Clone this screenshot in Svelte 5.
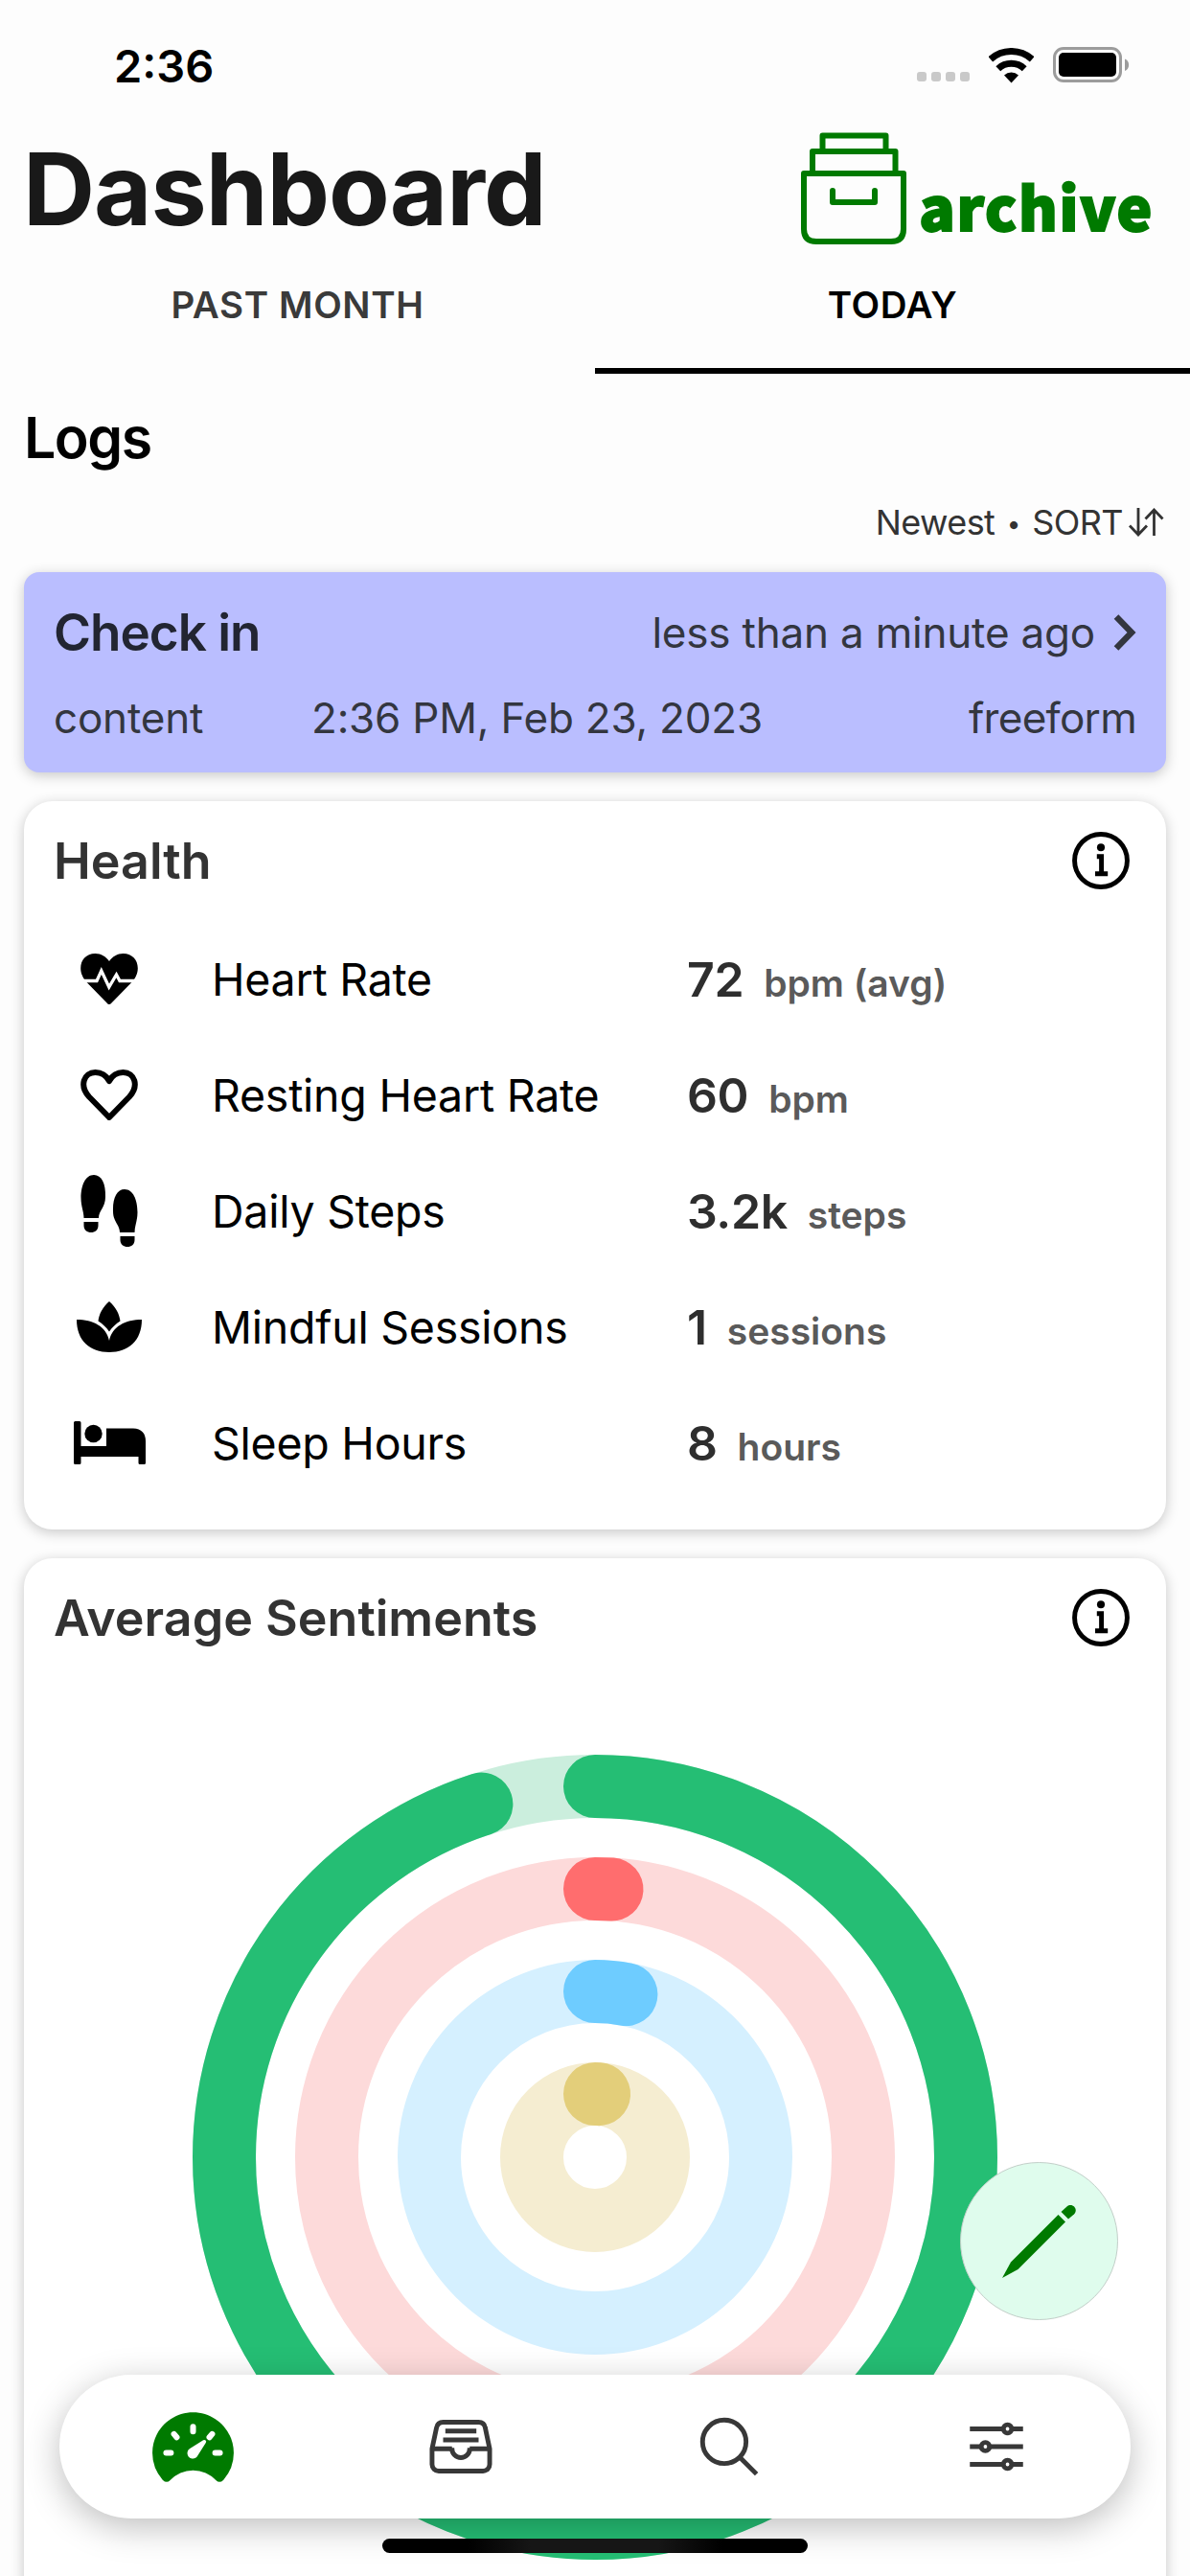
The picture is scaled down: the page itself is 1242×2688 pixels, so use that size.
<script lang="ts">
	interface Metric {
		icon: string;
		label: string;
		value: string;
		unit: string;
	}

	interface Ring {
		radius: number;
		percent: number;
		color: string;
		track: string;
	}

	let tab: 'month' | 'today' = 'today';
	let page = 'dashboard';

	const metrics: Metric[] = [
		{ icon: 'pulse', label: 'Heart Rate', value: '72', unit: 'bpm (avg)' },
		{ icon: 'heart', label: 'Resting Heart Rate', value: '60', unit: 'bpm' },
		{ icon: 'steps', label: 'Daily Steps', value: '3.2k', unit: 'steps' },
		{ icon: 'leaf', label: 'Mindful Sessions', value: '1', unit: 'sessions' },
		{ icon: 'bed', label: 'Sleep Hours', value: '8', unit: 'hours' }
	];

	const rings: Ring[] = [
		{ radius: 387, percent: 95, color: '#25be74', track: '#cbeedd' },
		{ radius: 280, percent: 1, color: '#ff6d6e', track: '#fddada' },
		{ radius: 173, percent: 3, color: '#6eccff', track: '#d5f0ff' },
		{ radius: 66, percent: 1, color: '#e3ce7a', track: '#f5edd1' }
	];

	const pages = ['dashboard', 'logs', 'search', 'settings'];

	function dash(ring: Ring) {
		const length = 2 * Math.PI * ring.radius;
		return `${(length * ring.percent) / 100} ${length}`;
	}
</script>

{#snippet info()}
	<svg class="info" viewBox="48 48 400 400">
		<g fill="none" stroke="#000" stroke-width="33">
			<circle cx="248" cy="248" r="183" />
			<path d="M220 220h32v116M208 340h88" />
		</g>
		<circle cx="248" cy="156" r="27" />
	</svg>
{/snippet}

<main>
	<div class="status">
		<span class="clock">2:36</span>
		<div class="indicators">
			<div class="signal">
				<i></i><i></i><i></i><i></i>
			</div>
			<svg class="wifi" width="47" height="37" viewBox="0 0 47 37">
				<g fill="none" stroke="#000" stroke-width="7">
					<path d="M1.8 11.8A32.5 32.5 0 0 1 45.2 11.8" />
					<path d="M9.8 21.8A20 20 0 0 1 37.2 21.8" />
				</g>
				<path d="M16 28.5A11 11 0 0 1 31 28.5L23.5 36.5Z" />
			</svg>
			<svg width="80" height="38" viewBox="0 0 80 38">
				<rect x="1.5" y="1.5" width="69" height="34" rx="9.5" fill="none" stroke="#9c9c9c" stroke-width="3" />
				<rect x="6" y="6" width="60" height="25" rx="5" />
				<path d="M75 12.5c5.5 2 5.5 10.5 0 12.5z" fill="#9c9c9c" />
			</svg>
		</div>
	</div>

	<header>
		<h1>Dashboard</h1>
		<div class="logo">
			<svg width="110" height="118" viewBox="0 0 110 118" fill="none" stroke="#007a00" stroke-width="6">
				<path d="M22.5 20V3.5H88.5V20" stroke-linejoin="round" />
				<path d="M12 43V20H98.5V43" stroke-linejoin="round" />
				<path d="M3 43H107V101Q107 114 94 114H16Q3 114 3 101Z" stroke-linejoin="round" />
				<path d="M33 61V73H77V61" stroke-linejoin="round" stroke-linecap="round" />
			</svg>
			<span>archive</span>
		</div>
	</header>

	<div class="tabs">
		<button class:active={tab === 'month'} on:click={() => (tab = 'month')}>PAST MONTH</button>
		<button class:active={tab === 'today'} on:click={() => (tab = 'today')}>TODAY</button>
	</div>

	<section>
		<h2>Logs</h2>
		<div class="sort">
			<span>Newest <small>•</small> SORT</span>
			<svg width="37" height="30" viewBox="0 0 37 30" fill="none" stroke="#333" stroke-width="2.8">
				<path d="M10 0V28M1 18.5L10 28L19 18.5" />
				<path d="M26.5 29V2M17.5 11.5L26.5 2L35.5 11.5" />
			</svg>
		</div>

		<div class="log">
			<div class="log-top">
				<b>Check in</b>
				<span class="ago">less than a minute ago</span>
				<svg width="24" height="38" viewBox="0 0 24 38" fill="none" stroke="#33363f" stroke-width="6.5">
					<path d="M3 2.5L19 19L3 35.5" />
				</svg>
			</div>
			<div class="log-bottom">
				<span>content</span>
				<span>2:36 PM, Feb 23, 2023</span>
				<span class="kind">freeform</span>
			</div>
		</div>

		<div class="card">
			<div class="card-head">
				<h3>Health</h3>
				{@render info()}
			</div>
			{#each metrics as metric}
				<div class="metric">
					<div class="icon">
						{#if metric.icon === 'pulse'}
							<svg width="60" height="53" viewBox="0 0 60 53">
								<path
									d="M30 53C29 53 28.5 52.5 27.5 51.5L7 30.5C-5 18.5 -0.5 0 15.5 0C21.5 0 26.5 3 30 8C33.5 3 38.5 0 44.5 0C60.5 0 65 18.5 53 30.5L32.5 51.5Q31 53 30 53Z"
								/>
								<path
									d="M0 28.5H17L21.8 18L29.8 35L37.5 22L41 28.5H60"
									fill="none"
									stroke="#fff"
									stroke-width="3.3"
								/>
							</svg>
						{:else if metric.icon === 'heart'}
							<svg width="60" height="53" viewBox="0 0 60 53">
								<path
									d="M30 50L9 28.5C-1.5 17 3.5 3 15.5 3C22 3 27 6.5 30 12C33 6.5 38 3 44.5 3C56.5 3 61.5 17 51 28.5Z"
									fill="none"
									stroke="#000"
									stroke-width="6"
									stroke-linejoin="round"
								/>
							</svg>
						{:else if metric.icon === 'steps'}
							<svg width="60" height="75" viewBox="0 0 60 75">
								<path
									d="M14 0C5 0 0.5 11 0.5 24C0.5 33 3.5 38 3.5 45H19C19 37 26 34 26 23C26.5 9 22 0 14 0Z"
								/>
								<path d="M3.5 49H18.5V53C18.5 57.5 15 60 11 60S3.5 57.5 3.5 53Z" />
								<path
									d="M46 15C55 15 59.5 26 59.5 39C59.5 48 56.5 53 56.5 60H41C41 52 34 49 34 38C33.5 24 38 15 46 15Z"
								/>
								<path d="M41.5 64H56.5V68C56.5 72.5 53 75 49 75S41.5 72.5 41.5 68Z" />
							</svg>
						{:else if metric.icon === 'leaf'}
							<svg width="68" height="53" viewBox="0 0 68 53">
								<path
									d="M34 0C27 6 23.5 13 22.5 20.5C27 23.5 31 27 34 31.5C37 27 41 23.5 45.5 20.5C44.5 13 41 6 34 0Z"
								/>
								<path
									d="M0 19C17 19 31 26 34 41C37 26 51 19 68 19C68 41 54 53 34 53C14 53 0 41 0 19Z"
								/>
							</svg>
						{:else}
							<svg width="75" height="45" viewBox="0 0 75 45">
								<path
									d="M1.5 0H6Q7.5 0 7.5 1.5V26H34V7.5H62Q75 8 75 21V43.5Q75 45 73.5 45H69Q67.5 45 67.5 43.5V37H7.5V43.5Q7.5 45 6 45H1.5Q0 45 0 43.5V1.5Q0 0 1.5 0Z"
								/>
								<circle cx="20.5" cy="13" r="9.2" />
							</svg>
						{/if}
					</div>
					<span class="label">{metric.label}</span>
					<div class="reading">
						<b>{metric.value}</b>
						<span>{metric.unit}</span>
					</div>
				</div>
			{/each}
		</div>

		<div class="card">
			<div class="card-head">
				<h3>Average Sentiments</h3>
				{@render info()}
			</div>
			<svg class="rings" viewBox="-420 -420 840 840" fill="none" stroke-width="66">
				{#each rings as ring}
					<circle r={ring.radius} stroke={ring.track} />
					<circle
						r={ring.radius}
						stroke={ring.color}
						stroke-linecap="round"
						stroke-dasharray={dash(ring)}
						transform="rotate(-90)"
					/>
				{/each}
			</svg>
		</div>
	</section>

	<button class="fab" aria-label="New log">
		<svg width="77" height="77" viewBox="0 0 77 77" fill="#007a00">
			<path d="M0 77L9 60.5L58.5 11L66 18.5L16.5 68Z" />
			<path d="M61.5 8L67.5 2.5C73-2 80 5 75 10.5L69 15.5Z" />
		</svg>
	</button>

	<nav>
		{#each pages as name}
			<button aria-label={name} class:current={page === name} on:click={() => (page = name)}>
				{#if name === 'dashboard'}
					<svg width="97" height="97" viewBox="0 0 512 512">
						<path
							d="M256 64C132.3 64 32 164.2 32 287.9a223.18 223.18 0 0 0 56.3 148.5c1.1 1.2 2.1 2.4 3.2 3.5a25.19 25.19 0 0 0 37.1-.1 173.13 173.13 0 0 1 254.8 0 25.19 25.19 0 0 0 37.1.1l3.2-3.5A223.18 223.18 0 0 0 480 287.9C480 164.2 379.7 64 256 64z"
							fill="#007a00"
						/>
						<path
							d="M326.1 261.9l-47.5 45.5a31 31 0 0 1-7 7 30.11 30.11 0 0 1-35-49l75.5-47.5a10.23 10.23 0 0 1 11.7 0 10.06 10.06 0 0 1 2.3 14z"
							fill="none"
						/>
						<path
							d="M326.1 231.9l-47.5 75.5a31 31 0 0 1-7 7 30.11 30.11 0 0 1-35-49l75.5-47.5a10.23 10.23 0 0 1 11.7 0 10.06 10.06 0 0 1 2.3 14z"
							fill="#fff"
						/>
						<path
							d="M256 144v26M404 288h-26M134 288h-26M151 184l15 18M361 184l-15 18"
							stroke="#fff"
							stroke-width="32"
							stroke-linecap="round"
						/>
					</svg>
				{:else if name === 'logs'}
					<svg width="74" height="74" viewBox="0 0 512 512">
						<path
							d="M384 80H128c-26 0-43 14-48 40L48 272v112a48.14 48.14 0 0 0 48 48h320a48.14 48.14 0 0 0 48-48V272l-32-152c-5-27-23-40-48-40z"
						/>
						<path d="M48 272h144M320 272h144M192 264v8a64 64 0 0 0 128 0v-8M144 144h224M128 208h256" />
					</svg>
				{:else if name === 'search'}
					<svg width="74" height="74" viewBox="0 0 512 512">
						<circle cx="221" cy="221" r="157" />
						<path d="M332 332L454 454" />
					</svg>
				{:else}
					<svg width="74" height="74" viewBox="0 0 512 512">
						<path d="M368 128h80M64 128h240M368 384h80M64 384h240M208 256h240M64 256h80" />
						<circle cx="336" cy="128" r="30" />
						<circle cx="176" cy="256" r="30" />
						<circle cx="336" cy="384" r="30" />
					</svg>
				{/if}
			</button>
		{/each}
	</nav>

	<div class="home-bar"></div>
</main>

<style>
	:global(body) {
		background: #fdfdfd;
	}
	main {
		position: relative;
		width: 1242px;
		height: 2688px;
		overflow: hidden;
		font-family: Inter, 'Liberation Sans', sans-serif;
		color: #000;
	}
	h1,
	h2,
	h3 {
		margin: 0;
	}
	svg {
		display: block;
		flex: none;
	}
	button {
		padding: 0;
		border: 0;
		background: none;
		font-family: inherit;
	}

	.status {
		display: flex;
		justify-content: space-between;
		align-items: center;
		height: 136px;
		box-sizing: border-box;
		padding: 0 63px 0 119px;
	}
	.clock {
		font-size: 47px;
		font-weight: 600;
	}
	.indicators {
		display: flex;
		align-items: center;
	}
	.signal {
		display: flex;
		gap: 5px;
		margin-top: 24px;
	}
	.signal i {
		width: 10px;
		height: 10px;
		border-radius: 3px;
		background: #c9c9c9;
	}
	.wifi {
		margin: 0 20px;
	}

	header {
		display: flex;
		justify-content: space-between;
		align-items: center;
		height: 122px;
		padding: 0 38px 0 24px;
	}
	h1 {
		font-size: 104px;
		font-weight: 700;
		letter-spacing: -1px;
		color: #191919;
	}
	.logo {
		display: flex;
		align-items: center;
	}
	.logo span {
		margin-left: 13px;
		padding-top: 34px;
		font-family: 'Noto Sans CJK JP', 'Noto Sans', sans-serif;
		font-size: 62px;
		font-weight: 900;
		line-height: 70px;
		letter-spacing: 1.6px;
		color: #007a00;
		-webkit-text-stroke: 2px #007a00;
	}

	.tabs {
		display: flex;
	}
	.tabs button {
		flex: 1;
		height: 132px;
		border-bottom: 6px solid transparent;
		font-size: 38.5px;
		font-weight: 600;
		line-height: 120px;
		letter-spacing: 0.6px;
		padding-bottom: 6px;
		color: #3a3a3a;
	}
	.tabs .active {
		color: #000;
		border-color: #000;
	}

	section {
		padding: 0 25px;
	}
	h2 {
		font-size: 59px;
		font-weight: 600;
		line-height: 133px;
		letter-spacing: -1.5px;
	}
	.sort {
		display: flex;
		justify-content: flex-end;
		align-items: center;
		gap: 6px;
		height: 44px;
		margin-bottom: 30px;
		padding-right: 2px;
		font-size: 36px;
		letter-spacing: -0.6px;
		color: #333;
	}
	.sort small {
		font-size: 26px;
		padding: 0 3px;
		vertical-align: 2px;
		line-height: 1;
	}

	.log {
		padding: 31px;
		border-radius: 16px;
		background: #babeff;
		box-shadow: 0 3px 14px rgba(0, 0, 0, 0.22);
		font-size: 44px;
		letter-spacing: -0.2px;
		color: #33363f;
	}
	.log-top {
		display: flex;
		align-items: center;
		height: 64px;
	}
	.log-top b {
		flex: 1;
		font-size: 53px;
		font-weight: 600;
		letter-spacing: -1px;
		color: #222532;
	}
	.ago {
		margin-right: 19px;
	}
	.log-bottom {
		display: grid;
		grid-template-columns: 269px 1fr auto;
		margin-top: 31px;
		line-height: 52px;
	}
	.kind {
		letter-spacing: -0.7px;
	}

	.card {
		margin-top: 30px;
		padding: 31px 31px 30px;
		border-radius: 30px;
		background: #fff;
		box-shadow: 0 3px 14px rgba(0, 0, 0, 0.22);
	}
	.card-head {
		display: flex;
		justify-content: space-between;
		align-items: center;
		height: 62px;
		margin-bottom: 32px;
	}
	h3 {
		font-size: 52px;
		font-weight: 600;
		color: #333;
	}
	.info {
		width: 60px;
		height: 60px;
		margin-right: 7px;
	}
	.metric {
		display: grid;
		grid-template-columns: 116px 545px 1fr;
		align-items: center;
		height: 121px;
	}
	.icon {
		display: flex;
		justify-content: center;
	}
	.label {
		padding-left: 49px;
		font-size: 46.5px;
		letter-spacing: -0.25px;
	}
	.reading {
		display: flex;
		align-items: baseline;
	}
	.reading b {
		font-size: 50px;
		font-weight: 600;
		letter-spacing: -0.4px;
		color: #2e2e2e;
	}
	.reading span {
		margin-left: 21px;
		font-size: 39px;
		font-weight: 600;
		color: #5a5a5a;
	}
	.rings {
		width: 840px;
		height: 840px;
		margin: 112px auto 60px;
	}

	.fab {
		position: absolute;
		left: 1002px;
		top: 2256px;
		display: flex;
		justify-content: center;
		align-items: center;
		width: 165px;
		height: 165px;
		border: 1px solid #c3cfc9;
		border-radius: 50%;
		background: #dffced;
	}
	nav {
		position: absolute;
		left: 62px;
		right: 62px;
		top: 2478px;
		display: flex;
		height: 150px;
		border-radius: 75px;
		background: #fff;
		box-shadow: 0 9px 36px rgba(0, 0, 0, 0.26);
	}
	nav button {
		flex: 1;
		display: flex;
		justify-content: center;
		align-items: center;
	}
	nav button:not(.current) svg {
		fill: none;
		stroke: #383838;
		stroke-width: 34;
		stroke-linejoin: round;
	}
	.home-bar {
		position: absolute;
		left: 399px;
		top: 2649px;
		width: 444px;
		height: 15px;
		border-radius: 8px;
		background: linear-gradient(90deg, #000 20%, #161616 35%, #161616 65%, #000 80%);
	}
</style>
